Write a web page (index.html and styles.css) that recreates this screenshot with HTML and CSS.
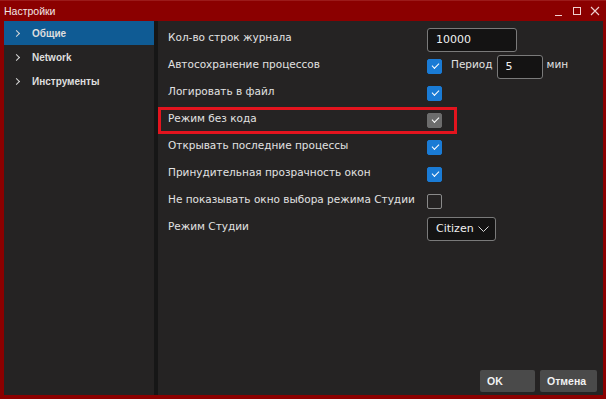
FILE: index.html
```html
<!DOCTYPE html>
<html lang="ru">
<head>
    <meta charset="UTF-8">
    <title>Настройки</title>
    <link rel="stylesheet" href="styles.css">
</head>
<body>
    <div class="window">
        <div class="titlebar">
            <span class="title">Настройки</span>
            <div class="win-buttons">
                <svg width="8" height="10" viewBox="0 0 8 10"><path d="M0 9.5h7" stroke="#f0d0d0" stroke-width="1"/></svg>
                <svg width="9" height="10" viewBox="0 0 9 10"><rect x="1.5" y="1.5" width="7" height="7" fill="none" stroke="#f0d0d0" stroke-width="1"/></svg>
                <svg width="10" height="10" viewBox="0 0 10 10"><path d="M1 1l8 8M9 1l-8 8" stroke="#f0d0d0" stroke-width="1.1"/></svg>
            </div>
        </div>

        <div class="frame">
            <!-- left tree -->
            <ul class="sidebar">
                <li class="nav-item active"><span class="chevron"></span>Общие</li>
                <li class="nav-item"><span class="chevron"></span>Network</li>
                <li class="nav-item"><span class="chevron"></span>Инструменты</li>
            </ul>
            <div class="splitter"></div>

            <div class="panel">
                <div class="rows">
                    <div class="row">
                        <span class="label">Кол-во строк журнала</span>
                        <input class="field wide" type="text" value="10000">
                    </div>
                    <div class="row">
                        <span class="label">Автосохранение процессов</span>
                        <span class="check on"></span>
                        <span class="inline-label">Период</span>
                        <input class="field small" type="text" value="5">
                        <span class="unit">мин</span>
                    </div>
                    <div class="row">
                        <span class="label">Логировать в файл</span>
                        <span class="check on"></span>
                    </div>
                    <div class="row marked">
                        <span class="label">Режим без кода</span>
                        <span class="check dim"></span>
                    </div>
                    <div class="row">
                        <span class="label">Открывать последние процессы</span>
                        <span class="check on"></span>
                    </div>
                    <div class="row">
                        <span class="label">Принудительная прозрачность окон</span>
                        <span class="check on"></span>
                    </div>
                    <div class="row">
                        <span class="label">Не показывать окно выбора режима Студии</span>
                        <span class="check"></span>
                    </div>
                    <div class="row">
                        <span class="label">Режим Студии</span>
                        <div class="select">Citizen
                            <svg width="11" height="6" viewBox="0 0 11 6"><path d="M0.5 0.5l5 5 5-5" fill="none" stroke="#d8d8d8" stroke-width="1"/></svg>
                        </div>
                    </div>
                </div>

                <div class="footer">
                    <button class="btn ok">OK</button>
                    <button class="btn">Отмена</button>
                </div>
            </div>
        </div>
    </div>
</body>
</html>
```

FILE: styles.css
```css
* {
    margin: 0;
    padding: 0;
    box-sizing: border-box;
}

body {
    background: #8b0000;
    font-family: "DejaVu Sans", sans-serif;
    font-size: 10.5px;
    color: #e2e2e2;
}

.window {
    display: flex;
    flex-direction: column;
    height: 399px;
    border-top: 1px solid #9c1a1a;
}

/* title bar */
.titlebar {
    height: 20px;
    display: flex;
    align-items: center;
    padding-left: 4px;
    padding-right: 6px;
}

.title {
    font-family: "Liberation Sans", sans-serif;
    font-size: 10.5px;
    color: #f2e6e6;
}

.win-buttons {
    margin-left: auto;
    display: flex;
    gap: 9px;
    align-items: center;
}

.frame {
    flex: 1;
    display: flex;
    padding: 0 3px 4px 4px;
}

/* left tree */
.sidebar {
    width: 150px;
    background: #252323;
    list-style: none;
    font-family: "Liberation Sans", sans-serif;
    font-size: 10px;
    font-weight: bold;
}

.nav-item {
    height: 24px;
    display: flex;
    align-items: center;
    color: #dedede;
}

.nav-item.active {
    background: #0f5b94;
}

.chevron {
    width: 5px;
    height: 5px;
    border-right: 1px solid #d8d8d8;
    border-top: 1px solid #d8d8d8;
    transform: rotate(45deg);
    margin-left: 10px;
    margin-right: 13px;
}

.splitter {
    width: 4px;
    background: #161616;
}

/* settings panel */
.panel {
    flex: 1;
    background: #252323;
    display: flex;
    flex-direction: column;
    padding-top: 5px;
}

.row {
    height: 27px;
    display: flex;
    align-items: center;
    padding-left: 10px;
}

.row.marked {
    width: 299px;
    outline: 3px solid #e3141e;
    outline-offset: -3px;
}

.label {
    flex: none;
    width: 259px;
    padding-bottom: 6px;
    white-space: nowrap;
}

.field {
    flex: none;
    background: #141313;
    border: 1px solid #7a7a7a;
    border-radius: 3px;
    color: #f0f0f0;
    font-family: "DejaVu Sans", sans-serif;
    font-size: 11px;
    height: 24px;
    padding-left: 8px;
    outline: none;
}

.field.wide {
    width: 90px;
}

.field.small {
    width: 46px;
}

.inline-label {
    margin: 0 4px 6px 9px;
}

.unit {
    margin: 0 0 6px 4px;
}

.check {
    flex: none;
    width: 15px;
    height: 15px;
    border: 1px solid #8a8a8a;
    border-radius: 2px;
    position: relative;
}

.check.on {
    background: #1a7bd5;
    border-color: #1a7bd5;
}

.check.dim {
    background: #6c6c6c;
    border-color: #6c6c6c;
}

.check.on::after,
.check.dim::after {
    content: "";
    position: absolute;
    left: 4px;
    top: 3px;
    width: 6px;
    height: 3px;
    border-left: 1px solid #fff;
    border-bottom: 1px solid #fff;
    transform: rotate(-45deg);
}

.select {
    flex: none;
    width: 69px;
    height: 24px;
    background: #141313;
    border: 1px solid #7a7a7a;
    border-radius: 3px;
    display: flex;
    align-items: center;
    justify-content: space-between;
    padding: 0 6px 0 8px;
    color: #f0f0f0;
    font-size: 11px;
}

.footer {
    margin-top: auto;
    display: flex;
    justify-content: flex-end;
    gap: 5px;
    padding: 0 6px 3px 0;
}

.btn {
    height: 22px;
    background: #4a4a4a;
    border: none;
    border-radius: 2px;
    color: #f2f2f2;
    font-family: "Liberation Sans", sans-serif;
    font-size: 10.5px;
    font-weight: bold;
    text-align: left;
    padding: 0 7px;
    width: 57px;
}

.btn.ok {
    width: 55px;
}
```
